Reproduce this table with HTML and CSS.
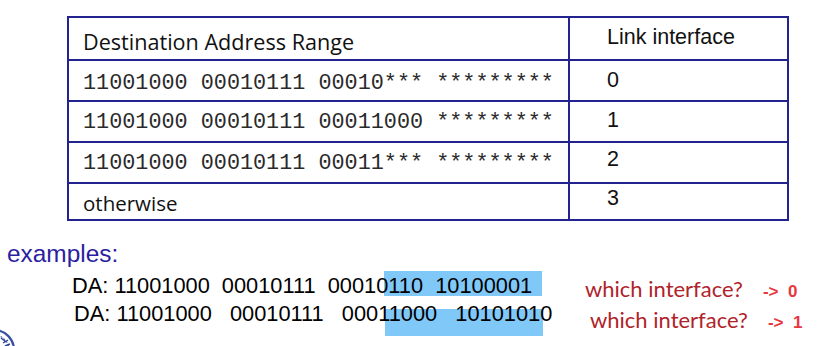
FILE: index.html
```html
<!DOCTYPE html>
<html lang="en">
<head>
<meta charset="utf-8">
<title>Longest prefix matching</title>
<link rel="stylesheet" href="styles.css">
</head>
<body>
<div class="slide">
  <table class="routes">
    <colgroup><col class="col-range"><col class="col-link"></colgroup>
    <tr class="row-head">
      <th class="range">Destination Address Range</th>
      <th class="link">Link interface</th>
    </tr>
    <tr class="row-1">
      <td class="bits">11001000 00010111 00010*** *********</td>
      <td class="iface">0</td>
    </tr>
    <tr class="row-2">
      <td class="bits">11001000 00010111 00011000 *********</td>
      <td class="iface">1</td>
    </tr>
    <tr class="row-3">
      <td class="bits">11001000 00010111 00011*** *********</td>
      <td class="iface">2</td>
    </tr>
    <tr class="row-4">
      <td class="other">otherwise</td>
      <td class="iface">3</td>
    </tr>
  </table>

  <section class="examples">
    <h2 class="examples-title">examples:</h2>
    <div class="ex-row ex-row-1">
      <span class="hl"></span>
      <p class="da">DA: 11001000  00010111  00010110  10100001</p>
      <p class="question">which interface?<span class="answer">-&gt;  0</span></p>
    </div>
    <div class="ex-row ex-row-2">
      <span class="hl"></span>
      <p class="da">DA: 11001000   00010111   00011000   10101010</p>
      <p class="question">which interface?<span class="answer">-&gt;  1</span></p>
    </div>
  </section>

  <svg class="seal" width="20" height="30" viewBox="0 0 20 30" aria-hidden="true">
    <circle cx="-6" cy="34" r="20" fill="none" stroke="#3a4f9e" stroke-width="2.2"/>
    <circle cx="-6" cy="34" r="15" fill="none" stroke="#5a6fb8" stroke-width="1.2" stroke-dasharray="2 1.5"/>
    <path d="M1 22 L6 26 M3 27 L8 24 M5 30 L10 28" stroke="#2e4596" stroke-width="1.4" fill="none"/>
  </svg>
</div>
</body>
</html>
```

FILE: styles.css
```css
html, body {
  margin: 0;
  padding: 0;
  background: #ffffff;
}

.slide {
  position: relative;
  width: 819px;
  height: 346px;
  overflow: hidden;
  padding-top: 16px;
  box-sizing: border-box;
}

.routes {
  margin-left: 67px;
  width: 720px;
  table-layout: fixed;
  border-collapse: collapse;
  border: 2px solid #23238f;
}

.col-range { width: 501px; }
.col-link { width: 219px; }

.routes th,
.routes td {
  border: 2px solid #23238f;
  padding: 0 0 0 14px;
  text-align: left;
  font-weight: normal;
  line-height: 24px;
  vertical-align: top;
  box-sizing: border-box;
}

.row-head th { height: 43px; }
.row-1 td, .row-2 td, .row-3 td { height: 41px; }
.row-4 td { height: 37px; }

.range {
  font-family: "Open Sans", sans-serif;
  font-size: 21.6px;
  color: #111;
  padding-top: 12px !important;
}

.link {
  font-family: "Liberation Sans", Arial, sans-serif;
  font-size: 21.5px;
  color: #111;
  padding-left: 37px !important;
  padding-top: 7px !important;
}

.bits {
  font-family: "Liberation Mono", "Courier New", monospace;
  font-size: 21.8px;
  color: #2a2a2a;
  white-space: pre;
  padding-top: 9px !important;
}

.row-1 .bits { padding-top: 11px !important; }

.other {
  font-family: "Open Sans", sans-serif;
  font-size: 20.5px;
  color: #111;
  padding-top: 7px !important;
}

.iface {
  font-family: "Liberation Sans", Arial, sans-serif;
  font-size: 21.5px;
  color: #111;
  padding-left: 37px !important;
}

.row-1 .iface { padding-top: 7px !important; }
.row-2 .iface { padding-top: 6px !important; }
.row-3 .iface { padding-top: 4px !important; }
.row-4 .iface { padding-top: 2px !important; }

.examples {
  margin-top: 19px;
}

.examples-title {
  margin: 0 0 5px 7px;
  font-family: "Liberation Sans", Arial, sans-serif;
  font-weight: normal;
  font-size: 24.4px;
  line-height: 28px;
  color: #2b1ea0;
}

.ex-row {
  position: relative;
  display: flex;
  align-items: flex-start;
  height: 28px;
}

.ex-row-1 { padding-left: 72px; }
.ex-row-2 { padding-left: 74px; }

.hl {
  position: absolute;
  background: #80c8f8;
  z-index: 0;
}

.ex-row-1 .hl { left: 384px; top: -2px; width: 158px; height: 25px; }
.ex-row-2 .hl { left: 385px; top: 8px; width: 158px; height: 27px; }

.da {
  position: relative;
  z-index: 1;
  margin: 0;
  font-family: "Liberation Sans", Arial, sans-serif;
  font-size: 21.8px;
  line-height: 26px;
  color: #000;
  white-space: pre;
}

.ex-row-1 .da { width: 513px; }
.ex-row-2 .da { width: 516px; }

.question {
  margin: 0;
  padding-top: 3px;
  font-family: Lato, "Open Sans", sans-serif;
  font-size: 22px;
  line-height: 26px;
  color: #b0232a;
  white-space: pre;
}

.ex-row-2 .question { padding-top: 6px; }

.answer {
  margin-left: 20px;
  font-family: "Liberation Sans", Arial, sans-serif;
  font-weight: bold;
  font-size: 17px;
  color: #e8363e;
}

.seal {
  position: absolute;
  left: 0;
  bottom: 0;
}
```
